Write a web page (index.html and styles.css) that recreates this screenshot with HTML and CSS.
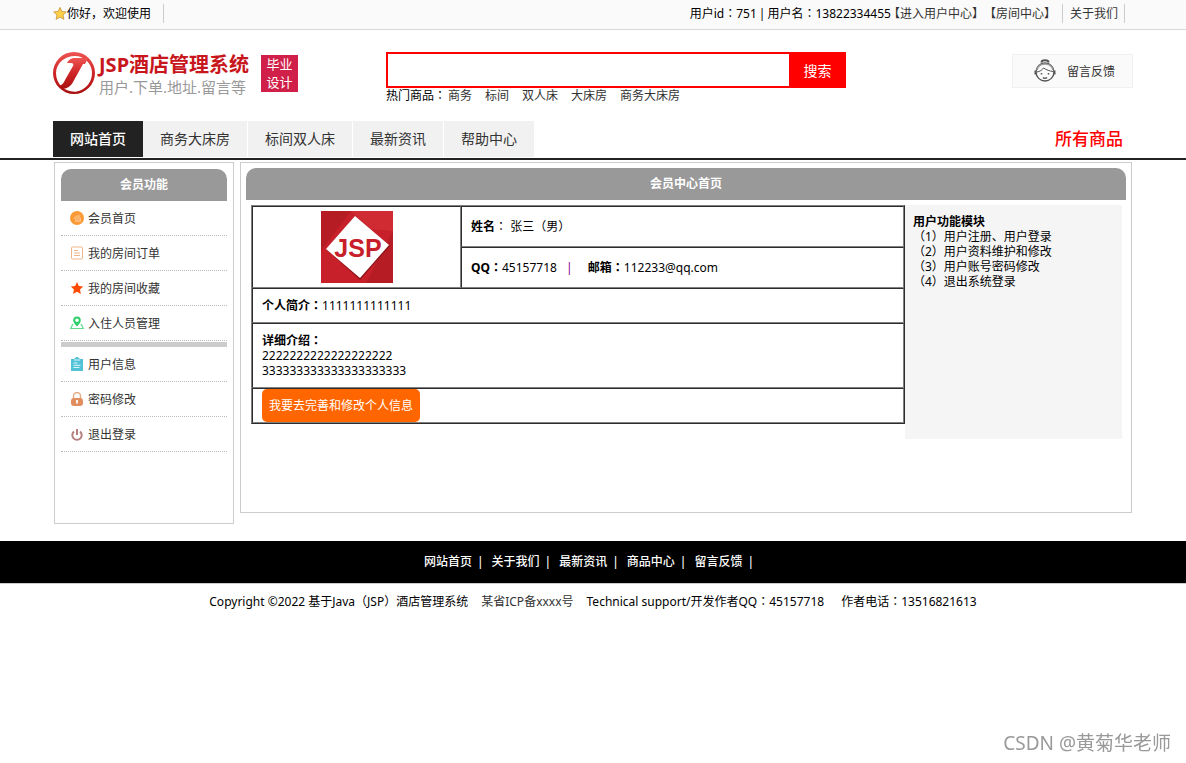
FILE: index.html
```html
<!DOCTYPE html>
<html lang="zh-CN">
<head>
<meta charset="utf-8">
<title>会员中心首页</title>
<link rel="stylesheet" href="styles.css">
</head>
<body>
<div class="topbar">
  <div class="wrap topbar-in">
    <div class="hello">
      <svg class="star" viewBox="0 0 16 16"><path d="M8 1l2.1 4.7 5.1.5-3.8 3.5 1.1 5L8 12.100l-4.500 2.600 1.100-5L.8 6.200l5.100-.5z" fill="#ffd04a" stroke="#c99a3c" stroke-width="1" stroke-linejoin="round"/></svg>
      <span>你好，欢迎使用</span>
    </div>
    <div class="account">
      <div class="ident"><span>用户id<span lang="zh-Hant">：</span>751</span><span>|</span><span>用户名<span lang="zh-Hant">：</span>13822334455</span></div><a href="#">【进入用户中心】</a><a href="#">【房间中心】</a>
      <a class="about" href="#">关于我们</a>
    </div>
  </div>
</div>

<header class="wrap header">
  <a class="logo" href="#">
    <svg class="mark" viewBox="0 0 42 42">
      <defs><linearGradient id="red" x1="0" y1="0" x2="0" y2="1"><stop offset="0" stop-color="#ee5552"/><stop offset=".5" stop-color="#cf2426"/><stop offset="1" stop-color="#a80f10"/></linearGradient></defs>
      <path fill="url(#red)" fill-rule="evenodd" d="M21 0a21 21 0 1 0 0 42 21 21 0 0 0 0-42zM22 4C31 4 38.500 11 39 20c.4 10-6 17.500-15 19.500C13 41 3 33 3 21 3 11 12 4 22 4z"/>
      <path fill="url(#red)" d="M14 11c2-4 5-5 8-5h13l-3 6h-2l-10 18c-2 4-6 7-11 7l-3-3c3-1 5-3 6-6l8-14c1-2 0-3-2-3z"/>
    </svg>
    <span class="names"><strong>JSP酒店管理系统</strong><span>用户.下单.地址.留言等</span></span>
    <span class="badge">毕业<br>设计</span>
  </a>
  <form class="search">
    <div class="search-row">
      <input type="text" aria-label="搜索商品">
      <button type="button">搜索</button>
    </div>
    <div class="hot"><span>热门商品<span lang="zh-Hant">：</span></span><a href="#">商务</a><a href="#">标间</a><a href="#">双人床</a><a href="#">大床房</a><a href="#">商务大床房</a></div>
  </form>
  <a class="feedback" href="#">
    <svg viewBox="0 0 22 24" fill="none" stroke="#555">
      <circle cx="11" cy="13" r="9" stroke-width="1.300"/>
      <path d="M7.500 3.500c0-3 7-3 7 0" stroke-width="2"/>
      <path d="M3 13c3-.5 5-2 6.500-4 3 2 6 3 9.500 3.500" stroke-width="1"/>
      <path d="M3 11c2-8 14-8 16 0" stroke="#999" stroke-width="1.500"/>
      <path d="M1.500 11.500v4M20.500 11.500v4" stroke-width="2"/>
      <path d="M9 18.500c1 1 3 1 4 0M7.500 14v1.500M14.500 14v1.500" stroke-width="1.500"/>
    </svg>
    <span>留言反馈</span>
  </a>
</header>

<div class="navbar">
  <div class="wrap nav-in">
    <nav class="nav"><a class="on" href="#">网站首页</a><a href="#">商务大床房</a><a href="#">标间双人床</a><a href="#">最新资讯</a><a href="#">帮助中心</a></nav>
    <a class="all" href="#">所有商品</a>
  </div>
</div>

<main class="wrap main">
  <aside class="side">
    <h2>会员功能</h2>
    <ul>
      <li><a href="#"><svg viewBox="0 0 14 14"><circle cx="7" cy="7" r="7" fill="#fb9a35"/><path d="M3.500 7.500l4-3.200L10.500 7v3.500h-5V7.500M9.800 3.500v2" fill="#fdb26a" stroke="#fdc080" stroke-width="1"/></svg>会员首页</a></li>
      <li><a href="#"><svg viewBox="0 0 14 14" fill="none" stroke="#efb78b"><rect x="1.500" y="1" width="11" height="12" rx="1"/><path d="M4 4.500h4M4 7h6M4 9.500h6"/></svg>我的房间订单</a></li>
      <li><a href="#"><svg viewBox="0 0 14 14"><path d="M7 1l1.900 4 4.300.5-3.200 3 .9 4.400L7 10.800l-3.900 2.100.9-4.400-3.200-3L5.100 5z" fill="#ff4a05"/></svg>我的房间收藏</a></li>
      <li><a href="#"><svg viewBox="0 0 14 14"><path d="M3.500 8.500h-1L.8 12.500h12.400l-1.700-4h-1" fill="none" stroke="#5fdc8e" stroke-width="1.200"/><path fill="#2fd06c" fill-rule="evenodd" d="M7 10.500C4 7.500 3.200 6 3.200 4.300a3.800 3.800 0 0 1 7.600 0C10.800 6 10 7.500 7 10.500zM7 2.500a1.800 1.800 0 1 0 0 3.600 1.800 1.800 0 0 0 0-3.600z"/></svg>入住人员管理</a></li>
    </ul>
    <hr>
    <ul>
      <li><a href="#"><svg viewBox="0 0 14 14"><path d="M1 2h3.500V1h1l.5-1h2l.5 1h1v1H13v12H1z" fill="#52c3d7"/><path d="M4 3h6M3.500 6h4M3.500 8.300h7M3.500 10.500h6" stroke="#d9f5f9"/></svg>用户信息</a></li>
      <li><a href="#"><svg viewBox="0 0 14 14"><path d="M3.500 8V4a3.500 3.500 0 0 1 7 0v4" fill="none" stroke="#e6a883" stroke-width="1.400"/><rect x="1" y="6" width="12" height="8" rx="3" fill="#e08d60"/><path d="M7 8v3.500" stroke="#fff" stroke-width="1.800"/></svg>密码修改</a></li>
      <li><a href="#"><svg viewBox="0 0 14 14" fill="none" stroke="#b57f7f" stroke-width="2"><path d="M4 4.500a4.700 4.700 0 1 0 6 0M7 2v6"/></svg>退出登录</a></li>
    </ul>
  </aside>

  <section class="panel">
    <h1>会员中心首页</h1>
    <div class="cols">
      <table class="info">
        <tr class="half">
          <td class="photo" rowspan="2">
            <svg viewBox="0 0 72 72">
              <rect width="72" height="72" fill="#c8202a"/>
              <path d="M0 0h30L0 40zM72 20v52H45z" fill="#b51c24"/><path d="M30 0h42v20L50 18z" fill="#d02a32"/>
              <path d="M34 5l35 30-30 34L6 39z" fill="#8e141b"/><path d="M34 5l34 29-29 33L5 38z" fill="#fff"/>
              <text x="37" y="46" text-anchor="middle">JSP</text>
            </svg>
          </td>
          <td><b>姓名</b><span lang="zh-Hant">：</span> 张三（男）</td>
        </tr>
        <tr class="half"><td><b>QQ<span lang="zh-Hant">：</span></b>45157718 <span class="bar">|</span> <b>邮箱<span lang="zh-Hant">：</span></b>112233@qq.com</td></tr>
        <tr class="line"><td colspan="2"><b>个人简介<span lang="zh-Hant">：</span></b>1111111111111</td></tr>
        <tr class="long"><td colspan="2"><b>详细介绍<span lang="zh-Hant">：</span></b><br>2222222222222222222<br>333333333333333333333</td></tr>
        <tr class="line"><td colspan="2"><button class="edit" type="button">我要去完善和修改个人信息</button></td></tr>
      </table>
      <div class="modules">
        <b>用户功能模块</b>
        <ol>
          <li>（1）用户注册、用户登录</li>
          <li>（2）用户资料维护和修改</li>
          <li>（3）用户账号密码修改</li>
          <li>（4）退出系统登录</li>
        </ol>
      </div>
    </div>
  </section>
</main>

<footer>
  <div class="foot-nav"><a href="#">网站首页</a><a href="#">关于我们</a><a href="#">最新资讯</a><a href="#">商品中心</a><a href="#">留言反馈</a></div>
  <div class="copy"><span>Copyright ©2022 基于Java（JSP）酒店管理系统</span><a href="#">某省ICP备xxxx号</a><span>Technical support/开发作者QQ<span lang="zh-Hant">：</span>45157718</span><span class="tel">作者电话<span lang="zh-Hant">：</span>13516821613</span></div>
</footer>
<div class="sign">CSDN @黄菊华老师</div>
</body>
</html>
```
FILE: styles.css
```css
* { box-sizing: border-box; }
body {
  margin: 0;
  font: 12px/15px "Noto Sans", "Noto Sans CJK SC", sans-serif;
  color: #000;
  background: #fff;
}
a { color: #333; text-decoration: none; }
ul, ol { list-style: none; margin: 0; padding: 0; }
button, input { font: inherit; }
svg { display: block; flex: none; }
[lang="zh-Hant"] { font-family: "Noto Sans CJK TC", sans-serif; line-height: 1; }
.wrap { max-width: 1080px; margin: 0 auto; }

.topbar { background: #fafafa; border-bottom: 1px solid #d8d8d8; }
.topbar-in { display: flex; justify-content: space-between; padding: 4px 8px 6px 0; line-height: 19px; }
.hello { display: flex; align-items: center; padding-right: 12px; border-right: 1px solid #ccc; }
.star { width: 14px; height: 15px; }
.account { display: flex; white-space: nowrap; }
.ident { display: flex; gap: 2px; margin-right: -3px; }
.about { margin-left: 6px; padding: 0 6px 0 7px; border: solid #ccc; border-width: 0 1px; }

.header { display: flex; padding-top: 22px; height: 91px; }
.logo { display: flex; width: 333px; }
.mark { width: 42px; height: 42px; }
.names { display: flex; flex-direction: column; margin-left: 4px; font-size: 15px; line-height: 20px; color: #999; white-space: nowrap; }
.names strong { font-size: 20px; line-height: 25px; color: #c8161d; }
.badge { margin: 3px 0 0 12px; width: 37px; height: 37px; background: #d01f48; color: #fff; font-size: 13px; line-height: 18px; text-align: center; }
.search { width: 460px; }
.search-row { display: flex; height: 36px; }
.search input { flex: 1; min-width: 0; border: 2px solid #f00; border-right: 0; outline: 0; padding: 0 6px; background: #fff; }
.search button { width: 57px; padding: 0; border: 0; background: #f00; color: #fff; font-size: 14px; }
.hot { display: flex; white-space: nowrap; }
.hot a { margin-right: 13px; }
.hot > span { margin-right: 2px; }
.feedback { display: flex; align-items: center; gap: 11px; margin: 2px 0 0 auto; padding-left: 21px; width: 121px; height: 34px; border: 1px solid #f0f0f0; background: #fafafa; }
.feedback svg { width: 22px; height: 24px; }

.navbar { border-bottom: 2px solid #222; }
.nav-in { display: flex; justify-content: space-between; padding-bottom: 1px; }
.nav { display: flex; gap: 1px; font-size: 14px; line-height: 36px; }
.nav a { padding: 0 17px; background: #f1f1f1; }
.nav .on { background: #222; color: #fff; font-weight: 500; margin-right: -1px; }
.all { padding-right: 10px; font-size: 17px; line-height: 36px; font-weight: 500; color: #f00; }

.main { display: flex; align-items: flex-start; gap: 6px; padding: 2px 1px 17px; }
h1, h2 { margin: 0; background: #999; color: #fff; font-size: 12px; line-height: 32px; text-align: center; border-radius: 10px 10px 0 0; }
.side { width: 180px; min-height: 362px; padding: 6px; border: 1px solid #ccc; }
.side li { border-bottom: 1px dotted #bbb; }
.side a { display: flex; align-items: center; gap: 4px; height: 34px; padding-left: 9px; }
.side svg { width: 14px; height: 14px; }
.side hr { margin: 1px 0 0; height: 5px; border: 0; background: #ccc; }
.panel { flex: 1; min-height: 351px; padding: 5px; border: 1px solid #ccc; }
.cols { display: flex; align-items: flex-start; padding: 5px 4px 0 5px; }
.info { flex: 1; border: 1px solid; border-color: #808080 #2c2c2c #2c2c2c #808080; border-spacing: 0; }
.info td { padding: 0 8px 0 9px; border: 1px solid; border-color: #2c2c2c #808080 #808080 #2c2c2c; }
.half { height: 41px; }
.line { height: 35px; }
.long { height: 65px; }
.info .photo { width: 209px; padding: 0; }
.photo svg { width: 72px; height: 72px; margin: 0 auto; }
.photo text { font: bold 25px "Liberation Sans", sans-serif; fill: #c8202a; }
.bar { margin: 0 12px 0 6px; color: #808; }
.edit { display: block; height: 33px; padding: 0 7px; border: 0; border-radius: 5px; background: #f60; color: #fff; }
.modules { width: 217px; height: 234px; padding: 9px 8px; background: #f5f5f5; }

footer { text-align: center; }
.foot-nav { display: flex; justify-content: center; background: #000; border-bottom: 1px solid #ccc; line-height: 42px; }
.foot-nav a { color: #fff; font-weight: 500; }
.foot-nav a::after { content: "|"; margin: 0 8px 0 5px; }
.copy { display: flex; justify-content: center; gap: 13px; padding-top: 10px; white-space: nowrap; }
.copy .tel { margin-left: 4px; }
.sign { position: fixed; right: 15px; bottom: 7px; font-size: 19px; line-height: 26px; color: #999; }
```
